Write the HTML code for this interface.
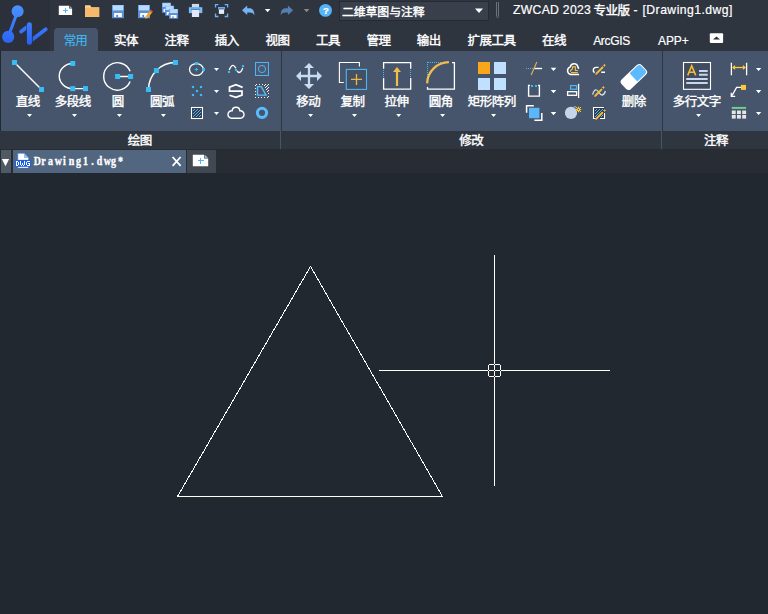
<!DOCTYPE html>
<html lang="zh-CN"><head><meta charset="utf-8"><title>ZWCAD 2023 专业版 - [Drawing1.dwg]</title>
<style>
html,body{margin:0;padding:0;background:#212830;}
body{width:768px;height:614px;overflow:hidden;position:relative;font-family:"Liberation Sans",sans-serif;color:#fff;}
.abs{position:absolute;}
svg.ov{position:absolute;left:0;top:0;width:768px;height:614px;overflow:visible;pointer-events:none;}
svg.ov text{font-family:"Liberation Sans","Noto Sans CJK SC",sans-serif;}
.lat{position:absolute;white-space:nowrap;line-height:1;color:#fff;-webkit-text-stroke:0.2px #fff;}
#titlebar{left:0;top:0;width:768px;height:51px;background:#2f353f;}
#logo{left:0;top:0;width:50px;height:51px;background:#2b303a;}
#combo{left:339px;top:1px;width:150px;height:20px;background:#3a404b;border:1px solid #262a32;box-sizing:border-box;}
#tab-active{left:54px;top:28px;width:44px;height:24px;background:#46556b;border-radius:4px 4px 0 0;}
#ribbon{left:1px;top:51px;width:767px;height:80px;background:#46556b;}
.psep{position:absolute;top:51px;width:1px;height:80px;background:#2e3541;}
.psep2{position:absolute;top:131px;width:1px;height:18px;background:#46556b;}
#strip{left:0;top:131px;width:768px;height:18px;background:#303640;}
#tabbar{left:0;top:149px;width:768px;height:24px;background:#282c33;}
#tabmenu{left:1px;top:150px;width:10px;height:23px;background:#4f5a64;}
#doctab{left:13px;top:150px;width:173px;height:23px;background:#536680;}
#newtab{left:187px;top:150px;width:29px;height:23px;background:#424852;}
#canvas{left:0;top:173px;width:768px;height:441px;background:#212830;}
</style></head><body>
<div id="titlebar" class="abs"></div>
<div id="logo" class="abs"></div>
<div id="combo" class="abs"></div>
<div id="tab-active" class="abs"></div>
<div id="ribbon" class="abs"></div>
<div id="strip" class="abs"></div>
<div class="psep" style="left:281px"></div>
<div class="psep" style="left:662px"></div>
<div class="psep2" style="left:280px"></div>
<div class="psep2" style="left:661px"></div>
<div id="tabbar" class="abs"></div>
<div id="tabmenu" class="abs"></div>
<div id="doctab" class="abs"></div>
<div id="newtab" class="abs"></div>
<div id="canvas" class="abs"></div>
<svg class="ov" viewBox="0 0 768 614"><defs><linearGradient id="lg" x1="0" y1="5" x2="0" y2="44" gradientUnits="userSpaceOnUse"><stop offset="0" stop-color="#4b92ff"/><stop offset="1" stop-color="#2a62f6"/></linearGradient><clipPath id="c1"><rect x="0" y="0" width="26.35" height="51"/></clipPath><clipPath id="c2"><rect x="32.75" y="0" width="20" height="51"/></clipPath></defs><g fill="url(#lg)" stroke="url(#lg)"><circle cx="17.6" cy="11.2" r="6" stroke="none"/><circle cx="8.2" cy="36.9" r="6.05" stroke="none"/><path d="M17.6 11.2L8.2 36.9" stroke-width="3" fill="none"/><path d="M21.2 31.5L30 24.8" stroke-width="3.9" stroke-linecap="round" fill="none" clip-path="url(#c1)"/><rect x="26.9" y="22.2" width="5" height="22.6" rx="2.5" stroke="none"/><path d="M28 43L45.7 29.3" stroke-width="3.7" stroke-linecap="round" fill="none" clip-path="url(#c2)"/></g><path d="M58.8 5.7H69.2V8.6H72.1V15.05H58.8z" fill="#fff"/><path d="M69.9 6V7.8H71.9z" fill="#a5d5ff"/><path d="M63 10.5h5M65.5 8v5" stroke="#56b6fa" stroke-width="1" fill="none"/><path d="M85 5.2h5.2l1.2 2h7.8v9.7H85z" fill="#f9d591"/><path d="M85 7.6h14.2v9.3H85z" fill="#f7b96b"/><rect x="112" y="5" width="12" height="13.2" fill="#5a90da"/><rect x="112.80" y="5" width="10.40" height="5.40" fill="#b9dbff"/><rect x="112.80" y="5" width="10.40" height="1.00" fill="#9fcafa"/><rect x="114.10" y="13.00" width="7.80" height="4.10" fill="#fbfbfb"/><rect x="116.30" y="14.90" width="1.80" height="2.20" fill="#4f8ad6"/><rect x="138" y="5" width="12" height="13.2" fill="#5a90da"/><rect x="138.80" y="5" width="10.40" height="5.40" fill="#b9dbff"/><rect x="138.80" y="5" width="10.40" height="1.00" fill="#9fcafa"/><rect x="140.10" y="13.00" width="7.80" height="4.10" fill="#fbfbfb"/><rect x="142.30" y="14.90" width="1.80" height="2.20" fill="#4f8ad6"/><path d="M145.3 18.6l0.5-2.3 4-5.4 2.3 1.7-4 5.4z" fill="#f6a31f"/><path d="M149.8 10.9l0.9-1.2 2.3 1.7-0.9 1.2z" fill="#ea5a55"/><path d="M145.3 18.6l0.5-2.3 1.7 1.3z" fill="#c4c8d0"/><rect x="162" y="2.9" width="9" height="9.9" fill="#5a90da"/><rect x="162.60" y="2.9" width="7.80" height="4.05" fill="#b9dbff"/><rect x="162.60" y="2.9" width="7.80" height="0.75" fill="#9fcafa"/><rect x="163.57" y="8.90" width="5.85" height="3.08" fill="#fbfbfb"/><rect x="165.22" y="10.33" width="1.35" height="1.65" fill="#4f8ad6"/><rect x="165.1" y="5.9" width="9" height="9.9" fill="#5a90da"/><rect x="165.70" y="5.9" width="7.80" height="4.05" fill="#b9dbff"/><rect x="165.70" y="5.9" width="7.80" height="0.75" fill="#9fcafa"/><rect x="166.67" y="11.90" width="5.85" height="3.08" fill="#fbfbfb"/><rect x="168.32" y="13.33" width="1.35" height="1.65" fill="#4f8ad6"/><rect x="169.1" y="9" width="9" height="9.8" fill="#5a90da"/><rect x="169.70" y="9" width="7.80" height="4.05" fill="#b9dbff"/><rect x="169.70" y="9" width="7.80" height="0.75" fill="#9fcafa"/><rect x="170.67" y="15.00" width="5.85" height="2.98" fill="#fbfbfb"/><rect x="172.32" y="16.43" width="1.35" height="1.55" fill="#4f8ad6"/><rect x="191.9" y="3.9" width="7.2" height="3.6" fill="#d3d8e3"/><rect x="188.9" y="7.2" width="13.4" height="5.9" fill="#7cbdf7"/><rect x="191" y="8.7" width="9.2" height="1.4" fill="#4a8ad8"/><rect x="191.9" y="10" width="7.2" height="7" fill="#e2e8f5"/><path d="M215.5 7.6v-2.9h2.9M224.7 4.7h2.9v2.9M227.6 13.6v2.9h-2.9M218.4 16.5h-2.9v-2.9" stroke="#6cb4f0" stroke-width="1.3" fill="none"/><rect x="218" y="7" width="7" height="2.4" fill="#6aaff0"/><rect x="218.6" y="8" width="5.8" height="0.8" fill="#3f7fce"/><rect x="218.9" y="9.4" width="5.2" height="4.5" fill="#e8ecf8"/><path d="M242 10.3l5.2-4.7v2.7h2.2c3.2 0 5 2.6 5 6.9c-1.2-1.9-2.6-2.6-4.6-2.6h-2.6v2.5z" fill="#74b4f4"/><path d="M264.85 8.90h5.5l-2.75 3.4z" fill="#ffffff"/><path d="M293.1 10.3l-5.2-4.7v2.7h-2.2c-3.2 0-5 2.6-5 6.9c1.2-1.9 2.6-2.6 4.6-2.6h2.6v2.5z" fill="#5580ae"/><path d="M303.85 8.90h5.5l-2.75 3.4z" fill="#8a8b8d"/><circle cx="325.5" cy="10.4" r="6.4" fill="#55b5f8"/><path d="M475.00 8.60h8l-4.00 4.4z" fill="#ffffff"/><path d="M496.5 2v14.5q0 1 1 1t1 -1V2" stroke="#6b707b" stroke-width="1" fill="none"/><g fill="#ffffff" stroke="#ffffff" stroke-width="0.4" font-size="11.9"><text x="341.97 353.77 365.57 377.37 389.17 400.97 412.77" y="16.3">二维草图与注释</text></g><g fill="#ffffff" stroke="#ffffff" stroke-width="0.4" font-size="12.5"><text x="593.56 605.56 617.56" y="14.76">专业版</text></g><g fill="#3fb9f2" stroke="#3fb9f2" stroke-width="0.15" font-size="12.5"><text x="63.76 75.36" y="45.36">常用</text></g><g fill="#ffffff" stroke="#ffffff" stroke-width="0.4" font-size="12.5"><text x="113.96 125.96" y="45.16">实体</text></g><g fill="#ffffff" stroke="#ffffff" stroke-width="0.4" font-size="12.5"><text x="164.56 176.56" y="45.16">注释</text></g><g fill="#ffffff" stroke="#ffffff" stroke-width="0.4" font-size="12.5"><text x="214.76 226.76" y="45.16">插入</text></g><g fill="#ffffff" stroke="#ffffff" stroke-width="0.4" font-size="12.5"><text x="265.56 277.56" y="45.16">视图</text></g><g fill="#ffffff" stroke="#ffffff" stroke-width="0.4" font-size="12.5"><text x="316.06 328.06" y="45.16">工具</text></g><g fill="#ffffff" stroke="#ffffff" stroke-width="0.4" font-size="12.5"><text x="366.56 378.56" y="45.16">管理</text></g><g fill="#ffffff" stroke="#ffffff" stroke-width="0.4" font-size="12.5"><text x="416.76 428.76" y="45.16">输出</text></g><g fill="#ffffff" stroke="#ffffff" stroke-width="0.4" font-size="12.5"><text x="467.56 479.56 491.56 503.56" y="45.16">扩展工具</text></g><g fill="#ffffff" stroke="#ffffff" stroke-width="0.4" font-size="12.5"><text x="542.06 554.06" y="45.16">在线</text></g><rect x="709.8" y="33.3" width="13.3" height="9.6" rx="1" fill="#fff"/><path d="M713 39.6h7l-3.5-3z" fill="#2b2f38"/></svg>
<div class="lat" style="left:513px;top:3.7px;font-size:12.2px;letter-spacing:0.3px;">ZWCAD 2023</div><div class="lat" style="left:633.4px;top:3.7px;font-size:12.2px;">-</div><div class="lat" style="left:642.5px;top:3.7px;font-size:12.2px;letter-spacing:0.46px;">[Drawing1.dwg]</div><div class="lat" style="left:593.2px;top:34.8px;font-size:12px;letter-spacing:-0.32px;">ArcGIS</div><div class="lat" style="left:658px;top:34.8px;font-size:12px;letter-spacing:-0.1px;">APP+</div><div class="lat" style="left:322.9px;top:5.6px;font-size:9.6px;font-weight:bold;">?</div>
<svg class="ov" viewBox="0 0 768 614"><path d="M14.5 62.5L41.5 89.5" stroke="#fff" fill="none" stroke-width="1.45"/><rect x="12.00" y="60.00" width="5" height="5" fill="#36bdf6"/><rect x="39.00" y="87.00" width="5" height="5" fill="#36bdf6"/><g fill="#ffffff" stroke="#ffffff" stroke-width="0.4" font-size="12.5"><text x="15.76 27.76" y="105.76">直线</text></g><path d="M27.00 114.10h5l-2.50 3z" fill="#ffffff"/><path d="M72.75 63.5A13.5 12.55 0 0 0 72.75 88.6H85.5" stroke="#fff" fill="none" stroke-width="1.45"/><rect x="70.25" y="61.00" width="5" height="5" fill="#36bdf6"/><rect x="70.25" y="86.10" width="5" height="5" fill="#36bdf6"/><rect x="83.00" y="86.10" width="5" height="5" fill="#36bdf6"/><g fill="#ffffff" stroke="#ffffff" stroke-width="0.4" font-size="12.5"><text x="54.76 66.76 78.76" y="105.76">多段线</text></g><path d="M72.00 114.10h5l-2.50 3z" fill="#ffffff"/><path d="M130.10 71.27A13.7 13.7 0 1 0 130.10 81.53" stroke="#fff" fill="none" stroke-width="1.45"/><path d="M117.6 76.5H130.6" stroke="#fff" fill="none" stroke-width="1.45"/><rect x="115.10" y="74.00" width="5" height="5" fill="#36bdf6"/><rect x="128.10" y="74.00" width="5" height="5" fill="#36bdf6"/><g fill="#ffffff" stroke="#ffffff" stroke-width="0.4" font-size="12.5"><text x="111.76" y="105.76">圆</text></g><path d="M116.90 114.10h5l-2.50 3z" fill="#ffffff"/><path d="M148.5 89.5A27 27 0 0 1 175.5 62.5" stroke="#fff" fill="none" stroke-width="1.45"/><rect x="146.00" y="87.00" width="5" height="5" fill="#36bdf6"/><rect x="153.90" y="68.10" width="5" height="5" fill="#36bdf6"/><rect x="173.00" y="60.00" width="5" height="5" fill="#36bdf6"/><g fill="#ffffff" stroke="#ffffff" stroke-width="0.4" font-size="12.5"><text x="149.96 161.96" y="105.76">圆弧</text></g><path d="M160.90 114.10h5l-2.50 3z" fill="#ffffff"/><ellipse cx="196.4" cy="69.5" rx="6.9" ry="5.9" stroke="#fff" fill="none" stroke-width="1.3"/><rect x="195.10" y="62.00" width="3" height="3" fill="#36bdf6"/><rect x="202.00" y="68.00" width="3" height="3" fill="#36bdf6"/><path d="M194.7 69.5h3.4M196.4 67.8v3.4" stroke="#36bdf6" stroke-width="1" fill="none"/><path d="M214.00 68.00h5l-2.50 3z" fill="#ffffff"/><path d="M214.00 90.00h5l-2.50 3z" fill="#ffffff"/><path d="M214.00 112.00h5l-2.50 3z" fill="#ffffff"/><rect x="191.90" y="85.90" width="2.2" height="2.2" fill="#36bdf6"/><rect x="199.90" y="85.90" width="2.2" height="2.2" fill="#36bdf6"/><rect x="195.90" y="89.90" width="2.2" height="2.2" fill="#36bdf6"/><rect x="191.90" y="93.90" width="2.2" height="2.2" fill="#36bdf6"/><rect x="199.90" y="93.90" width="2.2" height="2.2" fill="#36bdf6"/><rect x="191.5" y="107.5" width="11" height="11" fill="#2f3b4f" stroke="#fff" stroke-width="1.1"/><path d="M193 110h1v1h-1zM193 113h1v1h-1zM193 116h1v1h-1zM194 109h1v1h-1zM194 112h1v1h-1zM194 115h1v1h-1zM195 111h1v1h-1zM195 114h1v1h-1zM196 110h1v1h-1zM196 113h1v1h-1zM196 116h1v1h-1zM197 109h1v1h-1zM197 112h1v1h-1zM197 115h1v1h-1zM198 111h1v1h-1zM198 114h1v1h-1zM199 110h1v1h-1zM199 113h1v1h-1zM199 116h1v1h-1zM200 109h1v1h-1zM200 112h1v1h-1zM200 115h1v1h-1z" fill="#58b6f6" shape-rendering="crispEdges"/><path d="M229.4 69.6C230.6 66.6 231.8 65.3 233 65.3C234 65.3 234.9 66.5 235.7 67.8M237.2 71.2C237.8 72.2 238.4 72.5 239.2 72.5C240.6 72.5 241.8 70.6 242.6 68.4" stroke="#fff" fill="none" stroke-width="1.3" stroke-linecap="round"/><rect x="227.95" y="70.95" width="2.1" height="2.1" fill="#36bdf6"/><rect x="234.90" y="68.95" width="2.1" height="2.1" fill="#36bdf6"/><rect x="241.95" y="64.95" width="2.1" height="2.1" fill="#36bdf6"/><rect x="255.5" y="62.5" width="13" height="13" fill="#4b5a70" stroke="#4fb4f2" stroke-width="1"/><circle cx="262" cy="69" r="3.6" fill="none" stroke="#4fb4f2" stroke-width="1"/><path d="M242.6 87.4L235.9 84.6L229.5 87.1V91.1H242V95.1L235.9 97.3L229.5 95.3" stroke="#fff" fill="none" stroke-width="1.7" stroke-linejoin="miter"/><path d="M256 84h1v1h-1zM259 84h1v1h-1zM262 84h1v1h-1zM265 84h1v1h-1zM268 84h1v1h-1zM268 87h1v1h-1zM268 90h1v1h-1zM268 93h1v1h-1zM268 96h1v1h-1zM255 97h1v1h-1zM258 97h1v1h-1zM261 97h1v1h-1zM264 97h1v1h-1zM267 97h1v1h-1zM255 85h1v1h-1zM255 88h1v1h-1zM255 91h1v1h-1zM255 94h1v1h-1zM264 85h1v1h-1zM267 85h1v1h-1zM266 86h1v1h-1zM265 87h1v1h-1zM267 88h1v1h-1zM266 89h1v1h-1zM267 91h1v1h-1z" fill="#f2f5f9" shape-rendering="crispEdges"/><path d="M257.5 86.6H261.3L266 95.1H257.5z" fill="none" stroke="#5bbcfb" stroke-width="1.4"/><path d="M231.6 118.2H240.4A3.7 3.7 0 1 0 239.89 110.83A3.9 3.9 0 0 0 232.11 110.83A3.7 3.7 0 1 0 231.6 118.2z" stroke="#fff" fill="none" stroke-width="1.4"/><circle cx="262" cy="112.8" r="4.6" fill="none" stroke="#5bbcfb" stroke-width="3.05"/><g fill="#ffffff" stroke="#ffffff" stroke-width="0.4" font-size="12.5"><text x="127.76 139.76" y="144.96">绘图</text></g><path d="M309 63l5 5h-3.85v6.85h6.85v-3.85l5 5l-5 5v-3.85h-6.85v6.85h3.85l-5 5l-5-5h3.85v-6.85h-6.85v3.85l-5-5l5-5v3.85h6.85v-6.85h-3.85z" fill="#c8dcf4"/><g fill="#ffffff" stroke="#ffffff" stroke-width="0.4" font-size="12.5"><text x="296.36 308.36" y="105.76">移动</text></g><path d="M308.10 114.10h5l-2.50 3z" fill="#ffffff"/><path d="M343.8 82.5H339.4V62.5H359.4V66.6" stroke="#fff" fill="none" stroke-width="1.1"/><rect x="346.3" y="69.4" width="20.2" height="20" fill="#434f63" stroke="#4fb4f2" stroke-width="1.1"/><path d="M351 79.4h11M356.5 74v10.9" stroke="#eeb644" stroke-width="1.3" fill="none"/><g fill="#ffffff" stroke="#ffffff" stroke-width="0.4" font-size="12.5"><text x="340.56 352.56" y="105.76">复制</text></g><path d="M352.00 114.10h5l-2.50 3z" fill="#ffffff"/><path d="M383.6 68.8V62.6H410.7V68.8M410.7 78V89.2H383.6V78" stroke="#fff" fill="none" stroke-width="1.3"/><path d="M383 70h1v1h-1zM383 72h1v1h-1zM383 74h1v1h-1zM383 76h1v1h-1zM410 70h1v1h-1zM410 72h1v1h-1zM410 74h1v1h-1zM410 76h1v1h-1z" fill="#4db8f8" shape-rendering="crispEdges"/><path d="M397 86V71" stroke="#f3bd48" stroke-width="2.2" fill="none"/><path d="M393 72L397 67L401 72z" fill="#f3bd48"/><g fill="#ffffff" stroke="#ffffff" stroke-width="0.4" font-size="12.5"><text x="384.56 396.56" y="105.76">拉伸</text></g><path d="M396.20 114.10h5l-2.50 3z" fill="#ffffff"/><path d="M452 62.6H454.4V89.1H427.5V87" stroke="#fff" fill="none" stroke-width="1.3"/><path d="M427 62h1v1h-1zM428 62h1v1h-1zM430 62h1v1h-1zM432 62h1v1h-1zM434 62h1v1h-1zM436 62h1v1h-1zM438 62h1v1h-1zM440 62h1v1h-1zM427 64h1v1h-1zM427 66h1v1h-1zM427 68h1v1h-1zM427 70h1v1h-1zM427 72h1v1h-1zM427 74h1v1h-1zM427 76h1v1h-1z" fill="#4db8f8" shape-rendering="crispEdges"/><path d="M427.1 83.4A22 22 0 0 1 448.9 62.1" stroke="#f2be4c" stroke-width="2.2" fill="none"/><g fill="#ffffff" stroke="#ffffff" stroke-width="0.4" font-size="12.5"><text x="428.76 440.76" y="105.76">圆角</text></g><path d="M440.10 114.10h5l-2.50 3z" fill="#ffffff"/><rect x="478" y="62" width="12" height="12" fill="#f9a61a"/><rect x="494" y="62" width="12" height="12" fill="#bfe0ff"/><rect x="478" y="78" width="12" height="12" fill="#bfe0ff"/><rect x="494" y="78" width="12" height="12" fill="#bfe0ff"/><g fill="#ffffff" stroke="#ffffff" stroke-width="0.4" font-size="12.5"><text x="467.76 479.76 491.76 503.76" y="105.76">矩形阵列</text></g><path d="M491.10 114.10h5l-2.50 3z" fill="#ffffff"/><path d="M550.70 67.80h5.6l-2.80 3.2z" fill="#ffffff"/><path d="M550.70 90.00h5.6l-2.80 3.2z" fill="#ffffff"/><path d="M550.70 112.00h5.6l-2.80 3.2z" fill="#ffffff"/><path d="M526 68h1v1h-1zM528 68h1v1h-1zM530 68h1v1h-1zM532 68h1v1h-1z" fill="#4db8f8" shape-rendering="crispEdges"/><path d="M534.2 68.5H542.1" stroke="#fff" fill="none" stroke-width="1.4"/><path d="M536.8 62L531.2 75" stroke="#e4b44e" stroke-width="1.1" fill="none"/><path d="M530 85.4H528.6V96.1H539.4V85.4H538" stroke="#fff" fill="none" stroke-width="1.4"/><path d="M531 85h2v2h-2zM535 85h2v2h-2z" fill="#35bdf7" shape-rendering="crispEdges"/><rect x="529" y="107.8" width="10.4" height="10.4" fill="#5ab8fa"/><path d="M526.6 112.8V105.8H533.8M534.4 120.3H541.8V113" stroke="#fff" fill="none" stroke-width="1.5"/><path d="M579 74.55H570.5A4 4 0 0 1 570.3 66.9A3.9 3.9 0 0 1 577.8 66.5Q578.1 68.2 579 68.7" stroke="#fff" fill="none" stroke-width="1.5"/><path d="M570.5 71.7V70.5L572.5 69V66.9H575.4V70.5H577.8M571 72.6H577.8" stroke="#f5be40" stroke-width="1.1" fill="none"/><rect x="570.6" y="85.6" width="6" height="3.6" fill="none" stroke="#4fb4f2" stroke-width="1.3"/><rect x="567.6" y="91.7" width="9" height="3.6" stroke="#fff" fill="none" stroke-width="1.3"/><path d="M578.6 83.8V98" stroke="#fff" fill="none" stroke-width="1.3"/><circle cx="571" cy="112.9" r="6.1" fill="#c8d5e8"/><path d="M573.4 107.4q1.4-1.3 2.8-.2" stroke="#b9c5d8" stroke-width="1" fill="none"/><path d="M578.5 106.8v1.6M578.5 110.6v1.6M575.8 109.5h1.6M579.6 109.5h1.6" stroke="#ffce3a" stroke-width="1.2" fill="none"/><circle cx="578.5" cy="109.5" r="1.3" fill="none" stroke="#ffce3a" stroke-width="1.1"/><path d="M576 107h1v1h-1zM580 107h1v1h-1zM576 111h1v1h-1zM580 111h1v1h-1z" fill="#ffce3a" shape-rendering="crispEdges"/><path d="M598.6 67.4H596.2C592.6 67.6 592.6 71.4 594.6 72.6M601.2 72.3H605" stroke="#fff" fill="none" stroke-width="1.4"/><path d="M596.4 73.6L602.6 67.4" stroke="#f6be36" stroke-width="2" stroke-linecap="round" fill="none"/><path d="M595.5 74.5L596.4 73.6" stroke="#e8862e" stroke-width="1.2" fill="none"/><path d="M604.4 63.5L604.90 64.80L606.1999999999999 65.3L604.90 65.80L604.4 67.1L603.90 65.80L602.6 65.3L603.90 64.80z" fill="#f6c544"/><path d="M592.6 94.6C593.4 91.6 594.8 89.4 596.6 90C599 91 599.6 95.4 602.2 95C604 94.6 605 92.8 605.4 91" stroke="#d3d8e0" stroke-width="1.3" fill="none"/><path d="M595.3 95.7L601.4 89.6" stroke="#f6be36" stroke-width="2" stroke-linecap="round" fill="none"/><path d="M594.4 96.6L595.3 95.7" stroke="#e8862e" stroke-width="1.2" fill="none"/><path d="M603.3 85.60000000000001L603.80 86.90L605.0999999999999 87.4L603.80 87.90L603.3 89.2L602.80 87.90L601.5 87.4L602.80 86.90z" fill="#f6c544"/><rect x="593.5" y="107.5" width="11" height="11" fill="#2f3b4f"/><path d="M604 107.5H593.5V118.5H596M600 118.5H604.5V113" stroke="#fff" stroke-width="1.1" fill="none"/><path d="M595 110h1v1h-1zM595 113h1v1h-1zM595 116h1v1h-1zM596 109h1v1h-1zM596 112h1v1h-1zM596 115h1v1h-1zM597 111h1v1h-1zM597 114h1v1h-1zM598 110h1v1h-1zM598 113h1v1h-1zM598 116h1v1h-1zM599 109h1v1h-1zM599 112h1v1h-1zM599 115h1v1h-1zM600 111h1v1h-1zM600 114h1v1h-1zM601 110h1v1h-1zM601 113h1v1h-1zM601 116h1v1h-1zM602 109h1v1h-1zM602 112h1v1h-1zM602 115h1v1h-1z" fill="#58b6f6" shape-rendering="crispEdges"/><path d="M596.4 118.6L602.3 112.8" stroke="#f6be36" stroke-width="2" stroke-linecap="round" fill="none"/><path d="M595.5 119.5L596.4 118.6" stroke="#e8862e" stroke-width="1.2" fill="none"/><path d="M604.5 108.8L604.98 110.02L606.2 110.5L604.98 110.98L604.5 112.2L604.02 110.98L602.8 110.5L604.02 110.02z" fill="#f6c544"/><g transform="translate(633.9 77) rotate(-43.5)"><rect x="-13.9" y="-6.65" width="27.8" height="13.3" rx="3.6" fill="#fff"/><path d="M-0.6 -5.6H10.3a2.6 2.6 0 0 1 2.6 2.6V3a2.6 2.6 0 0 1-2.6 2.6H-0.6z" fill="#5dbbfd"/></g><g fill="#ffffff" stroke="#ffffff" stroke-width="0.4" font-size="12.5"><text x="621.76 633.76" y="105.76">删除</text></g><g fill="#ffffff" stroke="#ffffff" stroke-width="0.4" font-size="12.5"><text x="459.36 471.36" y="144.96">修改</text></g><rect x="683.5" y="62.5" width="27" height="26.8" fill="#414c60" stroke="#fff" stroke-width="1.1"/><path d="M699 71H707.7M699 74.8H707.7M686.2 78.9H707.7M686.2 82.9H707.7" stroke="#c8d6ec" stroke-width="2" fill="none"/><path d="M687.7 75.4L691.7 65.8L695.7 75.4M689.1 72.2H694.3" stroke="#f6ba30" stroke-width="1.6" fill="none"/><g fill="#ffffff" stroke="#ffffff" stroke-width="0.4" font-size="12.5"><text x="672.76 684.76 696.76 708.76" y="105.76">多行文字</text></g><path d="M696.10 114.10h5l-2.50 3z" fill="#ffffff"/><path d="M755.90 67.95h5.4l-2.70 3.1z" fill="#ffffff"/><path d="M755.90 90.05h5.4l-2.70 3.1z" fill="#ffffff"/><path d="M755.90 111.95h5.4l-2.70 3.1z" fill="#ffffff"/><path d="M731.4 62.8V75.2M746.6 62.8V75.2" stroke="#fff" fill="none" stroke-width="1.3"/><path d="M733 67.5H745" stroke="#ffc83a" stroke-width="1.3" fill="none"/><path d="M732.1 67.5l3-2.6v5.2zM745.9 67.5l-3-2.6v5.2z" fill="#ffc83a"/><path d="M741.4 87.4H736.6L732 95.6" stroke="#fff" fill="none" stroke-width="1.3"/><path d="M731.3 92.8V96.4H735.2" stroke="#fff" fill="none" stroke-width="1.3"/><rect x="741.00" y="84.90" width="5" height="5" fill="#ffc83a"/><rect x="731.8" y="106.9" width="14.3" height="2" fill="#6dd08a"/><rect x="731.8" y="110.5" width="3.9" height="3.6" fill="#e6e6e6"/><rect x="737" y="110.5" width="3.9" height="3.6" fill="#e6e6e6"/><rect x="742.2" y="110.5" width="3.9" height="3.6" fill="#e6e6e6"/><rect x="731.8" y="115" width="3.9" height="3.6" fill="#e6e6e6"/><rect x="737" y="115" width="3.9" height="3.6" fill="#e6e6e6"/><rect x="742.2" y="115" width="3.9" height="3.6" fill="#e6e6e6"/><g fill="#ffffff" stroke="#ffffff" stroke-width="0.4" font-size="12.5"><text x="703.96 715.96" y="144.96">注释</text></g></svg>
<svg class="ov" viewBox="0 0 768 614"><path d="M1.9 159h7.2l-3.6 7.2z" fill="#fff"/><path d="M17.8 153.3h6.2l4.6 4.6v10H17.8z" fill="#fff" stroke="#3a7be8" stroke-width="0.6"/><path d="M24 153.2l4.7 4.7H24z" fill="#8ec0f0"/><rect x="15" y="159.9" width="16" height="7" fill="#1a5fe6"/><rect x="18.6" y="166.9" width="9.4" height="0.7" fill="#fff"/><path d="M16 161h1v1h-1zM17 161h1v1h-1zM16 162h1v1h-1zM18 162h1v1h-1zM16 163h1v1h-1zM18 163h1v1h-1zM16 164h1v1h-1zM18 164h1v1h-1zM16 165h1v1h-1zM17 165h1v1h-1z" fill="#fff" shape-rendering="crispEdges"/><path d="M20 161h1v1h-1zM24 161h1v1h-1zM20 162h1v1h-1zM24 162h1v1h-1zM20 163h1v1h-1zM22 163h1v1h-1zM24 163h1v1h-1zM20 164h1v1h-1zM22 164h1v1h-1zM24 164h1v1h-1zM21 165h1v1h-1zM23 165h1v1h-1z" fill="#fff" shape-rendering="crispEdges"/><path d="M27 161h1v1h-1zM28 161h1v1h-1zM29 161h1v1h-1zM26 162h1v1h-1zM26 163h1v1h-1zM28 163h1v1h-1zM29 163h1v1h-1zM26 164h1v1h-1zM29 164h1v1h-1zM27 165h1v1h-1zM28 165h1v1h-1zM29 165h1v1h-1z" fill="#fff" shape-rendering="crispEdges"/><path d="M172.6 157L180.6 165.8M180.6 157L172.6 165.8" stroke="#fff" stroke-width="1.8" fill="none"/><path d="M192.8 154.8H204.2V158.4H208.2V166.15H192.8z" fill="#fff"/><path d="M204.9 155V157.8H208z" fill="#9fd2ff"/><path d="M198 160.5h6M200.5 158v6" stroke="#54b4fa" stroke-width="1" fill="none"/></svg>
<div class="lat" style="left:33px;top:154.6px;font-family:'Liberation Serif',serif;font-weight:bold;font-size:12.4px;-webkit-text-stroke:0.35px #fff;"><span style="display:inline-block;width:7px;text-align:center;transform:scaleX(.8);">D</span><span style="display:inline-block;width:7px;text-align:center;transform:scaleX(.8);">r</span><span style="display:inline-block;width:7px;text-align:center;transform:scaleX(.8);">a</span><span style="display:inline-block;width:7px;text-align:center;transform:scaleX(.8);">w</span><span style="display:inline-block;width:7px;text-align:center;transform:scaleX(.8);">i</span><span style="display:inline-block;width:7px;text-align:center;transform:scaleX(.8);">n</span><span style="display:inline-block;width:7px;text-align:center;transform:scaleX(.8);">g</span><span style="display:inline-block;width:7px;text-align:center;transform:scaleX(.8);">1</span><span style="display:inline-block;width:7px;text-align:center;transform:scaleX(.8);">.</span><span style="display:inline-block;width:7px;text-align:center;transform:scaleX(.8);">d</span><span style="display:inline-block;width:7px;text-align:center;transform:scaleX(.8);">w</span><span style="display:inline-block;width:7px;text-align:center;transform:scaleX(.8);">g</span><span style="display:inline-block;width:7px;text-align:center;transform:scaleX(.8);">*</span></div>
<svg class="ov" viewBox="0 0 768 614" shape-rendering="crispEdges"><path d="M310.5 266.5L177.5 496.5H442.5z" stroke="#fff" stroke-width="1" stroke-linejoin="bevel" fill="none"/><path d="M494.5 255V486M379 370.5H610" stroke="#fff" stroke-width="1" fill="none"/><rect x="488.5" y="364.5" width="12" height="12" stroke="#fff" stroke-width="1" fill="none"/><rect x="494" y="364" width="1" height="1" fill="#212830"/><rect x="494" y="376" width="1" height="1" fill="#212830"/><rect x="488" y="370" width="1" height="1" fill="#212830"/><rect x="500" y="370" width="1" height="1" fill="#212830"/><rect x="494" y="370" width="1" height="1" fill="#212830"/><rect x="488" y="364" width="1" height="1" fill="#212830"/><rect x="500" y="364" width="1" height="1" fill="#212830"/><rect x="488" y="376" width="1" height="1" fill="#212830"/><rect x="500" y="376" width="1" height="1" fill="#212830"/></svg>
</body></html>
